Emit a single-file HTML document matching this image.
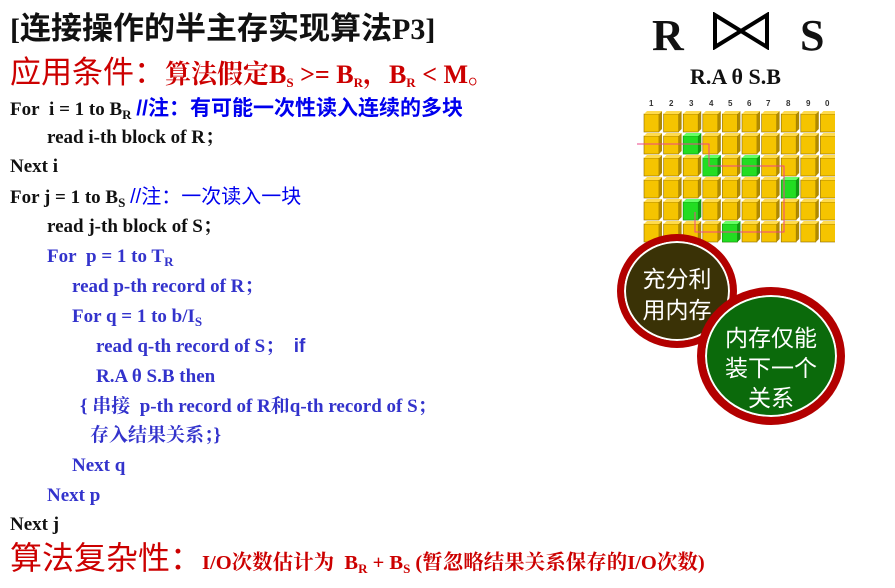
<!DOCTYPE html>
<html><head><meta charset="utf-8"><style>
body{margin:0;width:895px;height:573px;background:#fff;overflow:hidden;position:relative;font-family:"Liberation Serif","Noto Serif CJK SC",serif;font-weight:bold}
.l{position:absolute;white-space:nowrap;font-size:19px;line-height:22px}
.k{color:#111}.b{color:#3333cc}.n{color:#0000ee;font-family:"Liberation Sans","Noto Sans CJK SC",sans-serif}
sub{font-size:13px;vertical-align:-4px}
.r{color:#cc0000}
.sans{font-family:"Liberation Sans","Noto Sans CJK SC",sans-serif;font-weight:normal}
.circ{position:absolute;border-radius:50%;box-sizing:border-box;color:#fff;text-align:center;font-family:"Noto Sans CJK SC",sans-serif;font-weight:normal}
</style></head><body>
<div class="l k" style="left:10px;top:11px;font-size:30px;line-height:36px">[<span class="sans" style="font-weight:bold;color:#111;font-size:31px">连接操作的半主存实现算法</span>P3]</div>
<div class="l r" style="left:10px;top:55px;font-size:31px;line-height:36px"><span class="sans">应用条件：</span><span style="font-size:26px">算法假定B<sub>S</sub> &gt;= B<sub>R</sub>，B<sub>R</sub> &lt; M。</span></div>
<div class="l k" style="left:10px;top:98px">For&nbsp; i = 1 to B<sub>R</sub> <span class="n" style="font-size:21px">//注：有可能一次性读入连续的多块</span></div>
<div class="l k" style="left:47px;top:127px">read i-th block of R；</div>
<div class="l k" style="left:10px;top:156px">Next i</div>
<div class="l k" style="left:10px;top:186px">For j = 1 to B<sub>S</sub> <span class="n" style="font-weight:normal;font-size:20px">//注：一次读入一块</span></div>
<div class="l k" style="left:47px;top:216px">read j-th block of S；</div>
<div class="l b" style="left:47px;top:246px">For&nbsp; p = 1 to T<sub>R</sub></div>
<div class="l b" style="left:72px;top:276px">read p-th record of R；</div>
<div class="l b" style="left:72px;top:306px">For q = 1 to b/I<sub>S</sub></div>
<div class="l b" style="left:96px;top:336px">read q-th record of S；&nbsp; <span class="sans" style="font-weight:bold">if</span></div>
<div class="l b" style="left:96px;top:366px">R.A θ S.B then</div>
<div class="l b" style="left:80px;top:396px">{ 串接&nbsp; p-th record of R和q-th record of S；</div>
<div class="l b" style="left:90px;top:425px">存入结果关系；}</div>
<div class="l b" style="left:72px;top:455px">Next q</div>
<div class="l b" style="left:47px;top:485px">Next p</div>
<div class="l k" style="left:10px;top:514px">Next j</div>
<div class="l r" style="left:10px;top:539px;font-size:32px;line-height:38px"><span class="sans">算法复杂性：</span><span style="font-size:20.5px">I/O次数估计为&nbsp; B<sub>R</sub> + B<sub>S</sub> (暂忽略结果关系保存的I/O次数)</span></div>

<div class="l k" style="left:652px;top:12px;font-size:44px;line-height:48px">R</div>
<svg style="position:absolute;left:712px;top:12px" width="58" height="38"><path d="M3 3 L3 35 L55 3 L55 35 Z" fill="none" stroke="#000" stroke-width="4"/></svg>
<div class="l k" style="left:800px;top:12px;font-size:44px;line-height:48px">S</div>
<div class="l k" style="left:690px;top:64px;font-size:22px;line-height:26px">R.A θ S.B</div>

<svg style="position:absolute;left:635px;top:98px" width="200" height="150" font-family="Liberation Sans" font-size="8">
<defs>
<g id="y"><rect x="0" y="4" width="15" height="18" fill="#f5c400" stroke="#8a6a00" stroke-width="0.6"/><polygon points="15,4 18,1 18,19 15,22" fill="#b08a00"/><polygon points="0,4 3,1 18,1 15,4" fill="#ffdb4d"/></g>
<g id="g"><rect x="0" y="4" width="15" height="18" fill="#22dd22" stroke="#119911" stroke-width="0.6"/><polygon points="15,4 18,1 18,19 15,22" fill="#119911"/><polygon points="0,4 3,1 18,1 15,4" fill="#66ff66"/></g>
<g id="row"><use href="#y" x="9"/><use href="#y" x="28.6"/><use href="#y" x="48.2"/><use href="#y" x="67.8"/><use href="#y" x="87.4"/><use href="#y" x="107"/><use href="#y" x="126.6"/><use href="#y" x="146.2"/><use href="#y" x="165.8"/><use href="#y" x="185.4"/></g>
</defs>
<g fill="#333">
<text x="14" y="8">1</text><text x="34" y="8">2</text><text x="54" y="8">3</text><text x="74" y="8">4</text><text x="93" y="8">5</text><text x="112" y="8">6</text><text x="131" y="8">7</text><text x="151" y="8">8</text><text x="171" y="8">9</text><text x="190" y="8">0</text>
</g>
<use href="#row" y="12"/><use href="#row" y="34"/><use href="#row" y="56"/><use href="#row" y="78"/><use href="#row" y="100"/><use href="#row" y="122"/>
<use href="#g" x="48.2" y="34"/><use href="#g" x="67.8" y="56"/><use href="#g" x="107" y="56"/><use href="#g" x="146.2" y="78"/><use href="#g" x="48.2" y="100"/><use href="#g" x="87.4" y="122"/>
<polyline points="2,46 55,46 74,46 74,68 114,68 149,68 149,90 149,134 60,134 60,114" fill="none" stroke="#ee4488" stroke-width="1"/>
</svg>

<div class="circ" style="left:617px;top:234px;width:120px;height:114px;background:#3a3206;border:7px solid #b30000;box-shadow:0 0 0 2px #fff inset;padding-top:21px;font-size:23px;line-height:31px">充分利<br>用内存</div>
<div class="circ" style="left:697px;top:287px;width:148px;height:138px;background:#0b6a0b;border:8px solid #b30000;box-shadow:0 0 0 2px #fff inset;padding-top:26px;font-size:23px;line-height:30px">内存仅能<br>装下一个<br>关系</div>
</body></html>
